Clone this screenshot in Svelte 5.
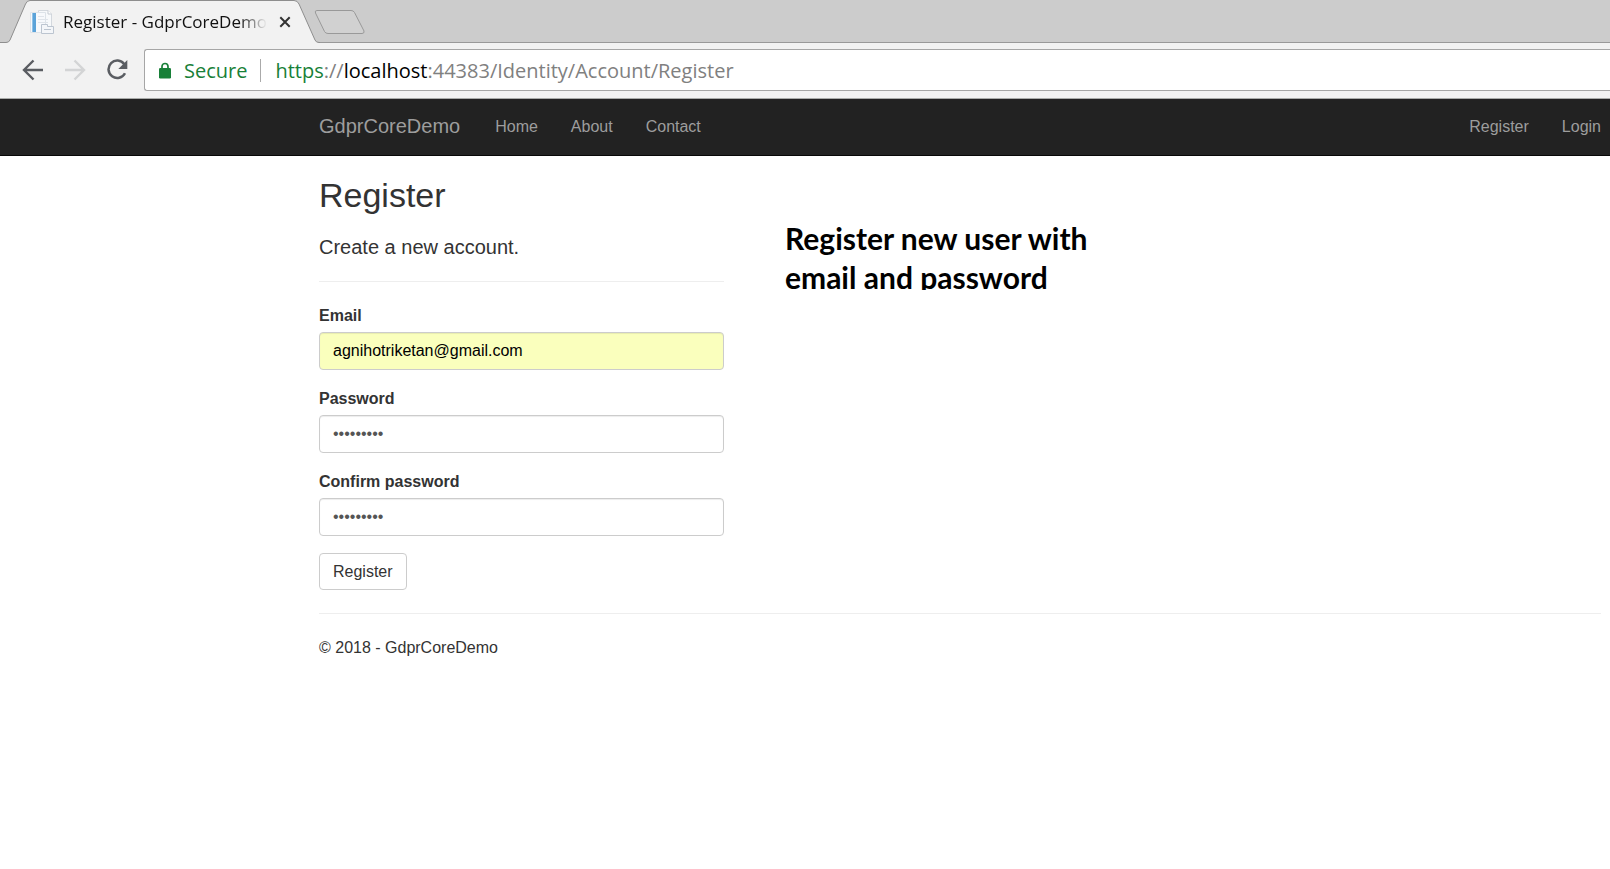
<script>
  let email = $state('agnihotriketan@gmail.com');
  let password = $state('Secret#18');
  let confirm = $state('Secret#18');
</script>

<header class="browser">
  <div class="tabs">
    <div class="tab">
      <svg class="tab-shape" viewBox="0 0 320 43" width="320" height="43" aria-hidden="true">
        <path d="M0 43V42.5H6Q9 42.5 10 40L25.500 4Q27 .5 30 .5H294Q297.500 .5 299 4L315 40Q316 42.500 319 42.500H320V43Z" fill="#f2f2f2" />
        <path d="M0 42.500H6Q9 42.500 10 40L25.500 4Q27 .5 30 .5H294Q297.500 .5 299 4L315 40Q316 42.500 319 42.500H320" fill="none" stroke="#8e8e8e" />
      </svg>
      <div class="tab-content">
        <svg viewBox="0 0 24 24" width="24" height="24" aria-hidden="true">
          <path d="M8.500 .5H18L21.500 4V20.500H8.500Z" fill="#f7f9fb" stroke="#d3d8de" />
          <path d="M18 .5V4H21.500" fill="#fff" stroke="#c5cbd3" />
          <path d="M.5 2.500H15.500V22.500H.5Z" fill="#f7f9fc" stroke="#dde3e9" />
          <path d="M2 3H6V22H2Z" fill="#5ba3d9" />
          <path d="M2 3H3V22H2Z" fill="#91c3e8" />
          <path d="M8 6.500H14M8 9.500H18M8 12.500H18" stroke="#dfe4ea" />
          <path d="M11.500 23.500V14.500H17.500V16.500H23.500V23.500Z" fill="#f4f6f9" stroke="#bcc5d0" />
          <path d="M14 19.500H21" stroke="#bcc5d0" />
        </svg>
        <span class="tab-title">Register - GdprCoreDemo</span>
        <button class="icon" aria-label="Close tab">
          <svg viewBox="0 0 12 12" width="12" height="12"><path d="M1.300 1.300L10.700 10.700M10.700 1.300L1.300 10.700" stroke="#333" stroke-width="2" /></svg>
        </button>
      </div>
    </div>
    <button class="icon new-tab" aria-label="New tab">
      <svg viewBox="0 0 52 26" width="52" height="26"><path d="M3 1.500H37Q39.500 1.500 40.500 3.500L50 22Q50.500 24.500 48 24.500H14Q11.500 24.500 10.500 22.500L1.500 4Q.5 1.500 3 1.500Z" fill="#d1d1d1" stroke="#999" /></svg>
    </button>
  </div>
  <div class="toolbar">
    <div class="controls">
      <button class="icon" aria-label="Back">
        <svg viewBox="0 0 22 22" width="22" height="22"><path d="M21 11H2.500M11.500 1.500L2 11L11.500 20.500" fill="none" stroke="#5a5d62" stroke-width="2.400" /></svg>
      </button>
      <button class="icon" aria-label="Forward" disabled>
        <svg viewBox="0 0 22 22" width="22" height="22"><path d="M1 11H19.500M10.500 1.500L20 11L10.500 20.500" fill="none" stroke="#d3d4d5" stroke-width="2.400" /></svg>
      </button>
      <button class="icon" aria-label="Reload">
        <svg viewBox="0 0 22 22" width="22" height="22"><path d="M18.300 5.200A8.700 8.700 0 1 0 19 14.200" fill="none" stroke="#5a5d62" stroke-width="2.500" /><path d="M21.300 1V10H12.300Z" fill="#5a5d62" /></svg>
      </button>
    </div>
    <div class="omnibox">
      <svg viewBox="0 0 12 17" width="12" height="17" aria-hidden="true"><path d="M3 7V4.500A3 3 0 0 1 9 4.500V7" fill="none" stroke="#188038" stroke-width="1.700" /><rect y="6" width="12" height="10.500" rx="1.300" fill="#188038" /></svg>
      <span class="secure">Secure</span>
      <div class="url" role="textbox" tabindex="0" aria-label="Address"><span class="scheme">https</span>://<span class="host">localhost</span>:44383/Identity/Account/Register</div>
    </div>
  </div>
</header>

<nav class="navbar">
  <a class="brand" href="#home">GdprCoreDemo</a>
  <a href="#home">Home</a>
  <a href="#about">About</a>
  <a href="#contact">Contact</a>
  <a class="push" href="#register">Register</a>
  <a href="#login">Login</a>
</nav>

<div class="container">
  <main>
    <h2>Register</h2>
    <div class="row">
      <form onsubmit={(e) => e.preventDefault()}>
        <h4>Create a new account.</h4>
        <hr />
        <div class="group">
          <label for="email">Email</label>
          <input id="email" class="autofill" type="email" bind:value={email} />
        </div>
        <div class="group">
          <label for="password">Password</label>
          <input id="password" type="password" bind:value={password} />
        </div>
        <div class="group">
          <label for="confirm">Confirm password</label>
          <input id="confirm" type="password" bind:value={confirm} />
        </div>
        <button class="submit" type="submit">Register</button>
      </form>
      <p class="note">Register new user with<br />email and password</p>
    </div>
  </main>
  <hr />
  <footer>© 2018 - GdprCoreDemo</footer>
</div>

<style>
  :global(body) {
    margin: 0;
    background: #fff;
    color: #333;
    font: 16px/23px "Liberation Sans", Arial, sans-serif;
  }
  *, *::before { box-sizing: border-box; }
  svg { display: block; flex: none; }
  .icon { display: block; padding: 0; border: 0; background: none; }

  .browser {
    font-family: "Open Sans", "Segoe UI", sans-serif;
    background: #f2f2f2;
    border-bottom: 1px solid #a9aba9;
  }
  .tabs {
    display: flex;
    align-items: center;
    height: 43px;
    background: #ccc;
    box-shadow: inset 0 -1px #999;
  }
  .tab { display: grid; width: 316px; }
  .tab-shape, .tab-content { grid-area: 1 / 1; }
  .tab-content {
    display: flex;
    align-items: center;
    padding: 0 30px 0 30px;
  }
  .tab-title {
    flex: 1;
    min-width: 0;
    margin: 0 12px 0 9px;
    overflow: hidden;
    white-space: nowrap;
    color: #111;
    font-size: 17px;
    mask-image: linear-gradient(to right, #000 calc(100% - 28px), transparent);
  }
  .new-tab { margin-left: -2px; }

  .toolbar {
    display: flex;
    align-items: center;
    gap: 16px;
    padding: 6px 0 7px 22px;
  }
  .controls { display: flex; gap: 20px; }
  .omnibox {
    display: flex;
    flex: 1;
    align-items: center;
    height: 42px;
    padding-left: 14px;
    border: 1px solid #a6a6a6;
    border-right: 0;
    border-radius: 3px 0 0 3px;
    background: #fff;
    font-size: 20px;
    white-space: nowrap;
  }
  .secure { margin: 0 13px; color: #188038; }
  .url { padding-left: 14px; border-left: 1px solid #aaa; color: #808080; }
  .scheme { color: #188038; }
  .host { color: #000; }

  .navbar {
    display: flex;
    align-items: center;
    gap: 33px;
    height: 57px;
    padding: 0 9px 2px 319px;
    background: #222;
    border-bottom: 1px solid #080808;
  }
  .navbar a { color: #9d9d9d; text-decoration: none; }
  .navbar .brand { margin-right: 2px; font-size: 20px; }
  .navbar .push { margin-left: auto; }

  .container { padding: 21px 9px 0 319px; }
  h2 { margin: 0 0 22px; font-size: 34px; line-height: 37px; font-weight: 400; }
  h4 { margin: 0; font-size: 20px; line-height: 22px; font-weight: 400; }
  hr { margin: 23px 0 22px; border: 0; border-top: 1px solid #eee; }
  .row {
    display: grid;
    grid-template-columns: minmax(0, 405px) auto;
    justify-content: start;
    align-items: start;
    gap: 61px;
  }
  .group { margin-bottom: 17px; }
  label { display: block; margin-bottom: 5px; font-weight: 700; }
  input {
    display: block;
    width: 100%;
    height: 38px;
    padding: 6px 13px 7px;
    border: 1px solid #ccc;
    border-radius: 4px;
    background: #fff;
    box-shadow: inset 0 1px 1px rgba(0, 0, 0, 0.075);
    color: #555;
    font: inherit;
  }
  .autofill { background: #faffbd; color: #000; }
  .submit {
    display: block;
    height: 37px;
    padding: 0 13px;
    border: 1px solid #ccc;
    border-radius: 4px;
    background: #fff;
    color: #333;
    font: inherit;
  }
  .note {
    height: 71px;
    margin: -17px 0 0;
    overflow: hidden;
    color: #000;
    font: 700 30px/39px Lato, Calibri, sans-serif;
  }
</style>
